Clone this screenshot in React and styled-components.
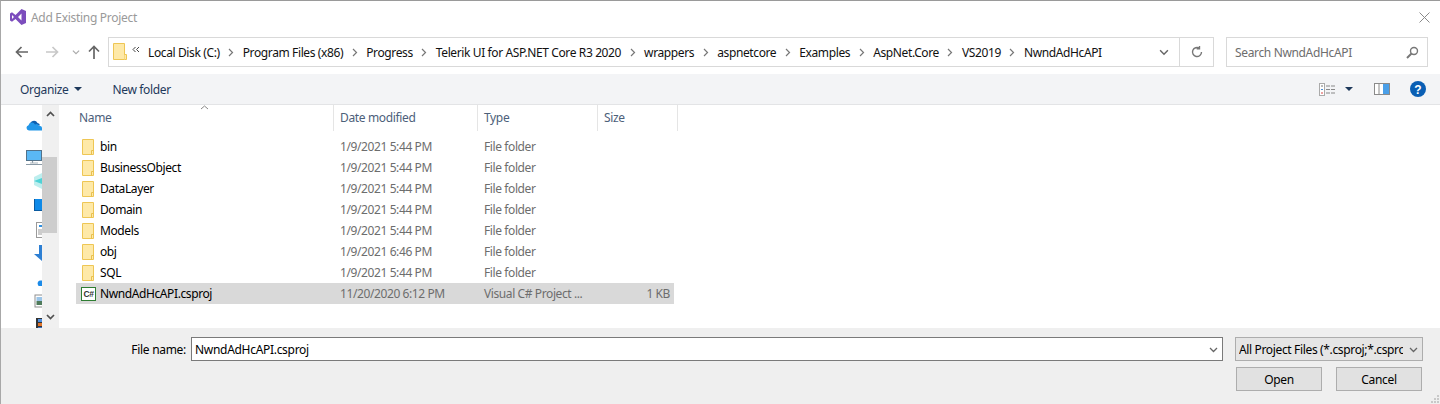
import styled, { createGlobalStyle } from 'styled-components';

const GlobalStyle = createGlobalStyle`
  html, body {
    margin: 0;
    padding: 0;
    background: #fff;
  }
  body {
    font-family: "Noto Sans", "Open Sans", "Liberation Sans", sans-serif;
    font-size: 12px;
  }
`;

const Dialog = styled.div`
  width: 1440px;
  height: 404px;
  box-sizing: border-box;
  border-top: 1px solid #9a9a9a;
  border-left: 1px solid #a8a8a8;
  display: flex;
  flex-direction: column;
  overflow: hidden;
  background: #fff;
  position: relative;
`;

// bits of the window behind, showing over the top edge
const BehindBit = styled.div`
  position: absolute;
  top: -1px;
  left: ${(p) => p.$left}px;
  width: ${(p) => p.$width}px;
  height: 1px;
  background: ${(p) => p.$color};
`;

const TitleBar = styled.div`
  height: 32px;
  flex: none;
  display: flex;
  align-items: center;
  padding: 0 10px 0 9px;
  gap: 5px;
`;

const Title = styled.div`
  flex: 1;
  color: #9a9a9a;
  font-size: 12px;
  letter-spacing: -0.3px;
`;

const NavRow = styled.div`
  height: 30px;
  margin-top: 4px;
  flex: none;
  display: flex;
  align-items: center;
  padding-right: 11px;
`;

const NavButtons = styled.div`
  width: 107px;
  flex: none;
  display: flex;
  align-items: center;
  padding-left: 14px;
  box-sizing: border-box;
`;

const AddressBar = styled.div`
  width: 1106px;
  height: 30px;
  box-sizing: border-box;
  border: 1px solid #d9d9d9;
  display: flex;
  align-items: center;
  flex: none;
  padding-left: 4px;
`;

const Crumbs = styled.div`
  flex: 1;
  display: flex;
  align-items: center;
  color: #111;
  white-space: nowrap;
  overflow: hidden;
`;

const Crumb = styled.span`
  letter-spacing: -0.38px;
`;

const CrumbSep = styled.span`
  width: 23px;
  flex: none;
  display: flex;
  justify-content: center;
`;

const AddressChevron = styled.span`
  display: flex;
  margin-right: 10px;
`;

const AddressEnd = styled.div`
  width: 33px;
  height: 28px;
  flex: none;
  border-left: 1px solid #d9d9d9;
  display: flex;
  align-items: center;
  justify-content: center;
`;

const SearchBox = styled.div`
  width: 202px;
  height: 30px;
  box-sizing: border-box;
  margin-left: 12px;
  border: 1px solid #d9d9d9;
  display: flex;
  align-items: center;
  justify-content: space-between;
  padding: 0 8px;
  color: #6d6d6d;
  letter-spacing: -0.35px;
`;

const Toolbar = styled.div`
  height: 30px;
  margin-top: 7px;
  flex: none;
  background: #f3f4f6;
  border-bottom: 1px solid #e3e4e6;
  display: flex;
  align-items: center;
  padding: 0 14px 0 19px;
  color: #1e395b;
`;

const ToolButton = styled.div`
  display: flex;
  align-items: center;
  gap: 6px;
  margin-right: ${(p) => p.$gap || 0}px;
  letter-spacing: -0.35px;
`;

const ToolSpacer = styled.div`
  flex: 1;
`;

const ViewCaret = styled.span`
  display: flex;
  margin: 0 21px 0 9px;
`;

const Main = styled.div`
  flex: 1;
  min-height: 0;
  display: flex;
`;

const Sidebar = styled.div`
  width: 57px;
  flex: none;
  display: flex;
  border-right: 1px solid #f0f0f0;
  margin-right: 2px;
  box-sizing: content-box;
`;

const NavIcons = styled.div`
  width: 41px;
  flex: none;
  overflow: hidden;
  display: flex;
  flex-direction: column;
  align-items: flex-start;
  padding-left: 25px;
  box-sizing: border-box;
`;

const NavIcon = styled.svg`
  width: 16px;
  height: 16px;
  flex: none;
  margin-top: ${(p) => p.$top}px;
`;

const ScrollBar = styled.div`
  width: 16px;
  flex: none;
  background: #f0f0f0;
  display: flex;
  flex-direction: column;
  align-items: center;
  justify-content: space-between;
  position: relative;
  padding-bottom: 3px;
  box-sizing: border-box;
`;

const ScrollArrow = styled.div`
  height: 17px;
  display: flex;
  align-items: center;
  justify-content: center;
`;

const ScrollThumb = styled.div`
  position: absolute;
  top: 52px;
  left: 0;
  width: 15px;
  height: 76px;
  background: #cdcdcd;
`;

const FileArea = styled.div`
  flex: 1;
  display: flex;
  flex-direction: column;
  padding-left: 15px;
`;

const HeaderRow = styled.div`
  height: 26px;
  display: grid;
  grid-template-columns: 258px 144px 120px 80px;
  position: relative;
  margin-bottom: 5px;
`;

const SortCaret = styled.svg`
  position: absolute;
  left: 124px;
  top: 0;
`;

const HeaderCell = styled.div`
  border-right: 1px solid #e5e5e5;
  display: flex;
  align-items: center;
  padding: 0 0 2px ${(p) => p.$pad || 6}px;
  color: #4c607a;
  letter-spacing: -0.35px;
  box-sizing: border-box;
`;

const FileRow = styled.div`
  width: 598px;
  height: 21px;
  display: grid;
  grid-template-columns: 258px 144px 120px 76px;
  align-items: center;
  background: ${(p) => (p.$selected ? '#d9d9d9' : 'transparent')};
`;

const NameCell = styled.div`
  display: flex;
  align-items: center;
  gap: 4px;
  padding-left: 4px;
  color: #000;
  letter-spacing: -0.4px;
`;

const InfoCell = styled.div`
  padding-left: 6px;
  color: #6d6d6d;
  letter-spacing: -0.4px;
  white-space: nowrap;
  overflow: hidden;
  text-align: ${(p) => (p.$right ? 'right' : 'left')};
  padding-right: ${(p) => (p.$right ? 4 : 0)}px;
`;

const Footer = styled.div`
  height: 76px;
  flex: none;
  background: #efefef;
  position: relative;
  display: flex;
  flex-direction: column;
  padding: 9px 17px 0 0;
  box-sizing: border-box;
`;

const FooterRow = styled.div`
  display: flex;
  justify-content: flex-end;
  align-items: center;
  color: #000;
`;

const FieldLabel = styled.label`
  margin-right: 5px;
  letter-spacing: -0.3px;
`;

const NameInput = styled.div`
  width: 1032px;
  height: 24px;
  box-sizing: border-box;
  background: #fff;
  border: 1px solid #7a7a7a;
  display: flex;
  align-items: center;
  justify-content: space-between;
  padding: 0 4px 0 3px;
  letter-spacing: -0.3px;
`;

const FilterSelect = styled.div`
  width: 188px;
  height: 24px;
  box-sizing: border-box;
  margin-left: 12px;
  background: #e5e5e5;
  border: 1px solid #adadad;
  display: flex;
  align-items: center;
  justify-content: space-between;
  padding: 0 4px 0 3px;
`;

const FilterText = styled.span`
  width: 164px;
  overflow: hidden;
  white-space: nowrap;
  letter-spacing: -0.35px;
`;

const Buttons = styled.div`
  display: flex;
  justify-content: flex-end;
  gap: 14px;
  margin-top: 6px;
  padding-right: 1px;
`;

const Button = styled.button`
  width: 86px;
  height: 24px;
  box-sizing: border-box;
  background: #e1e1e1;
  border: 1px solid #adadad;
  padding: 0;
  font: inherit;
  color: #000;
  letter-spacing: -0.3px;
`;

const Grip = styled.svg`
  position: absolute;
  right: 1px;
  bottom: 1px;
`;

const FolderIcon = () => (
  <svg width="16" height="16" viewBox="0 0 16 16" style={{ flex: 'none' }}>
    <path d="M2.500.5h11v15h-11z" fill="#fee9a8" stroke="#eec654" />
    <path d="M11.500 15.500v-4h2" fill="none" stroke="#e8c04f" />
  </svg>
);

const BigFolderIcon = () => (
  <svg width="14" height="18" viewBox="0 0 14 18" style={{ flex: 'none' }}>
    <path d="M.5.5h11v16H.5z" fill="#fee9a8" stroke="#eec654" />
    <path d="M11.500 16.500h2v-5h-2" fill="#fee9a8" stroke="#eec654" />
  </svg>
);

const CsprojIcon = () => (
  <svg width="16" height="14" viewBox="0 0 16 14" style={{ flex: 'none' }}>
    <rect x="1.500" y="0.500" width="14" height="13" fill="#fff" stroke="#2e7d32" />
    <text x="8.500" y="10" textAnchor="middle" fontSize="8.500" fontWeight="700" fontFamily="Liberation Sans" fill="#333">C#</text>
  </svg>
);

const VsLogo = () => (
  <svg width="16" height="16" viewBox="0 0 16 16" style={{ flex: 'none' }}>
    <path d="M11.500 0 16 2v12l-4.500 2-6-6-3.500 2.700L0 11.500v-7L2 3.300 5.500 6zM2 6v4l2-2zm9.500-1.500L8 8l3.500 3.500z" fill="#7c4dbd" />
  </svg>
);

const Chevron = ({ color = '#666', size = 9 }) => (
  <svg width={size} height={size} viewBox="0 0 9 9">
    <path d="M1 3l3.500 3.500L8 3" fill="none" stroke={color} strokeWidth="1.300" />
  </svg>
);

const CrumbArrow = () => (
  <svg width="6" height="9" viewBox="0 0 6 9">
    <path d="M1 1l3.500 3.500L1 8" fill="none" stroke="#777" strokeWidth="1.200" />
  </svg>
);

const Caret = () => (
  <svg width="8" height="4" viewBox="0 0 8 4">
    <path d="M0 0h8L4 4z" fill="#1e395b" />
  </svg>
);

const crumbs = [
  'Local Disk (C:)',
  'Program Files (x86)',
  'Progress',
  'Telerik UI for ASP.NET Core R3 2020',
  'wrappers',
  'aspnetcore',
  'Examples',
  'AspNet.Core',
  'VS2019',
  'NwndAdHcAPI',
];

const folders = [
  ['bin', '1/9/2021 5:44 PM'],
  ['BusinessObject', '1/9/2021 5:44 PM'],
  ['DataLayer', '1/9/2021 5:44 PM'],
  ['Domain', '1/9/2021 5:44 PM'],
  ['Models', '1/9/2021 5:44 PM'],
  ['obj', '1/9/2021 6:46 PM'],
  ['SQL', '1/9/2021 5:44 PM'],
];

export default function App() {
  return (
    <Dialog>
      <GlobalStyle />
      <BehindBit $left={1247} $width={5} $color="#6cc04a" />
      <BehindBit $left={1265} $width={8} $color="#4a5a90" />
      <TitleBar>
        <VsLogo />
        <Title>Add Existing Project</Title>
        <svg width="11" height="11" viewBox="0 0 11 11">
          <path d="M.5.5l10 10M10.500.5l-10 10" stroke="#8a8a8a" fill="none" />
        </svg>
      </TitleBar>
      <NavRow>
        <NavButtons>
          <svg width="14" height="12" viewBox="0 0 14 12">
            <path d="M13 6H2M6.500 1 1.500 6l5 5" fill="none" stroke="#666" strokeWidth="1.700" />
          </svg>
          <svg width="14" height="12" viewBox="0 0 14 12" style={{ marginLeft: 16 }}>
            <path d="M1 6h11M7.500 1l5 5-5 5" fill="none" stroke="#c8c8c8" strokeWidth="1.700" />
          </svg>
          <span style={{ marginLeft: 13, display: 'flex' }}>
            <Chevron color="#aaa" size={8} />
          </span>
          <svg width="12" height="14" viewBox="0 0 12 14" style={{ marginLeft: 8 }}>
            <path d="M6 14V2M1 6.500l5-5 5 5" fill="none" stroke="#666" strokeWidth="1.700" />
          </svg>
        </NavButtons>
        <AddressBar>
          <BigFolderIcon />
          <Crumbs>
            <svg width="8" height="7" viewBox="0 0 8 7" style={{ margin: '0 8px 5px 5px', flex: 'none' }}>
              <path d="M3.500 1 1 3.500 3.500 6M7 1 4.500 3.500 7 6" fill="none" stroke="#444" />
            </svg>
            {crumbs.flatMap((c, i) => {
              const crumb = <Crumb key={c}>{c}</Crumb>;
              return i === 0 ? [crumb] : [<CrumbSep key={`sep-${c}`}><CrumbArrow /></CrumbSep>, crumb];
            })}
          </Crumbs>
          <AddressChevron>
            <Chevron color="#666" size={10} />
          </AddressChevron>
          <AddressEnd>
            <svg width="12" height="12" viewBox="0 0 12 12">
              <path d="M10.500 6a4.500 4.500 0 1 1-2-3.700M8.500 0v2.800H5.700" fill="none" stroke="#777" strokeWidth="1.400" />
            </svg>
          </AddressEnd>
        </AddressBar>
        <SearchBox>
          Search NwndAdHcAPI
          <svg width="13" height="13" viewBox="0 0 13 13">
            <circle cx="8" cy="5" r="3.500" fill="none" stroke="#777" strokeWidth="1.400" />
            <path d="M5.500 7.500 1 12" stroke="#777" strokeWidth="2" />
          </svg>
        </SearchBox>
      </NavRow>
      <Toolbar>
        <ToolButton $gap={30}>
          Organize
          <Caret />
        </ToolButton>
        <ToolButton>New folder</ToolButton>
        <ToolSpacer />
        <svg width="17" height="13" viewBox="0 0 17 13">
          <rect x="0.500" y="0.500" width="5" height="12" fill="#fff" stroke="#aaa" />
          <path d="M2 3h2" stroke="#777" />
          <path d="M2 6.500h2" stroke="#4a8fd8" />
          <path d="M2 10h2" stroke="#d44" />
          <path d="M7 3h4M12 3h4M7 6.500h4M12 6.500h4M7 10h4M12 10h4" stroke="#888" />
        </svg>
        <ViewCaret>
          <Caret />
        </ViewCaret>
        <svg width="16" height="12" viewBox="0 0 16 12">
          <rect x="0.500" y="0.500" width="15" height="11" fill="#fff" stroke="#8a8a8a" />
          <rect x="9" y="1" width="6" height="10" fill="#4a9fe8" />
          <path d="M5 1v10" stroke="#8a8a8a" />
        </svg>
        <svg width="16" height="16" viewBox="0 0 16 16" style={{ marginLeft: 20 }}>
          <circle cx="8" cy="8" r="8" fill="#0a5fb4" />
          <text x="8" y="12.500" textAnchor="middle" fontSize="12" fontWeight="700" fontFamily="Liberation Sans" fill="#fff">?</text>
        </svg>
      </Toolbar>
      <Main>
        <Sidebar>
          <NavIcons>
            <NavIcon $top={12} viewBox="0 0 16 16">
              <path d="M4 8.500A4 4 0 0 1 11.500 6 3 3 0 0 1 14 8.500z" fill="#0d5fb0" />
              <path d="M3 13.500a2.700 2.700 0 0 1-.5-5.300 3.500 3.500 0 0 1 6.500-.7 3 3 0 0 1 4 1.500 2.300 2.300 0 0 1 3 2.300v2.200z" fill="#2196e8" />
            </NavIcon>
            <NavIcon $top={17} viewBox="0 0 16 16">
              <rect x="0.500" y="0.500" width="15" height="10" fill="#5ab8f5" stroke="#52728a" />
              <path d="M6.500 11v2M0 14.500h16" stroke="#8a9aa6" strokeWidth="1.200" />
              <path d="M4 13h8" stroke="#aab4bc" />
            </NavIcon>
            <NavIcon $top={7} viewBox="0 0 16 16">
              <path d="M8 4l8-4v16l-8-4z" fill="#bdeeee" />
              <path d="M8 8l8-3v6z" fill="#4fd2d6" />
            </NavIcon>
            <NavIcon $top={8} viewBox="0 0 16 16">
              <rect x="8" y="2" width="8" height="12" fill="#0f8ae8" />
              <path d="M8 2h1v12H8zM8 13h8v1H8z" fill="#0a5aa0" />
            </NavIcon>
            <NavIcon $top={9} viewBox="0 0 16 16">
              <rect x="10.500" y="0.500" width="6" height="15" fill="#fff" stroke="#9a9a9a" />
              <path d="M13 3h3v2h-3z" fill="#2f8fe0" />
              <path d="M12 8h4M12 10h4M12 12h4" stroke="#9a9a9a" />
            </NavIcon>
            <NavIcon $top={7} viewBox="0 0 16 16">
              <path d="M13 0h3v16l-8-7h5z" fill="#2d7fd3" />
            </NavIcon>
            <NavIcon $top={14} viewBox="0 0 16 16">
              <path d="M12 10a3 3 0 0 1 3-4.500h1V11h-3a1.500 1.500 0 0 1-1-1z" fill="#1b8ae8" />
            </NavIcon>
            <NavIcon $top={3} viewBox="0 0 16 16">
              <rect x="9" y="1" width="8" height="12" fill="#fff" stroke="#8f8f8f" />
              <rect x="10.500" y="3" width="6" height="4" fill="#9ac4e8" />
              <rect x="10.500" y="7" width="6" height="4" fill="#4f7a5a" />
            </NavIcon>
            <NavIcon $top={6} viewBox="0 0 16 16">
              <rect x="10" y="2" width="6" height="14" fill="#333" />
              <rect x="12" y="3" width="4" height="3" fill="#4f8fe0" />
              <rect x="12" y="7" width="4" height="3" fill="#e0742a" />
              <rect x="12" y="11" width="4" height="3" fill="#3a70c0" />
            </NavIcon>
          </NavIcons>
          <ScrollBar>
            <ScrollArrow>
              <svg width="9" height="6" viewBox="0 0 9 6">
                <path d="M1 5l3.500-3.500L8 5" fill="none" stroke="#505050" strokeWidth="1.700" />
              </svg>
            </ScrollArrow>
            <ScrollThumb />
            <ScrollArrow>
              <svg width="9" height="6" viewBox="0 0 9 6">
                <path d="M1 1l3.500 3.500L8 1" fill="none" stroke="#505050" strokeWidth="1.700" />
              </svg>
            </ScrollArrow>
          </ScrollBar>
        </Sidebar>
        <FileArea>
          <HeaderRow>
            <HeaderCell $pad={3}>Name</HeaderCell>
            <SortCaret width="9" height="5" viewBox="0 0 9 5">
              <path d="M1 4l3.500-3L8 4" fill="none" stroke="#888" />
            </SortCaret>
            <HeaderCell>Date modified</HeaderCell>
            <HeaderCell>Type</HeaderCell>
            <HeaderCell>Size</HeaderCell>
          </HeaderRow>
          {folders.map(([name, date]) => (
            <FileRow key={name}>
              <NameCell>
                <FolderIcon />
                {name}
              </NameCell>
              <InfoCell>{date}</InfoCell>
              <InfoCell>File folder</InfoCell>
              <InfoCell />
            </FileRow>
          ))}
          <FileRow $selected>
            <NameCell>
              <CsprojIcon />
              NwndAdHcAPI.csproj
            </NameCell>
            <InfoCell>11/20/2020 6:12 PM</InfoCell>
            <InfoCell>Visual C# Project ...</InfoCell>
            <InfoCell $right>1 KB</InfoCell>
          </FileRow>
        </FileArea>
      </Main>
      <Footer>
        <FooterRow>
          <FieldLabel>File name:</FieldLabel>
          <NameInput>
            NwndAdHcAPI.csproj
            <Chevron color="#666" />
          </NameInput>
          <FilterSelect>
            <FilterText>All Project Files (*.csproj;*.csproj</FilterText>
            <Chevron color="#666" />
          </FilterSelect>
        </FooterRow>
        <Buttons>
          <Button>Open</Button>
          <Button>Cancel</Button>
        </Buttons>
        <Grip width="8" height="8" viewBox="0 0 8 8">
          <path d="M6 0h2v2H6zM3 3h2v2H3zM6 3h2v2H6zM0 6h2v2H0zM3 6h2v2H3zM6 6h2v2H6z" fill="#c8c8c8" />
        </Grip>
      </Footer>
    </Dialog>
  );
}
